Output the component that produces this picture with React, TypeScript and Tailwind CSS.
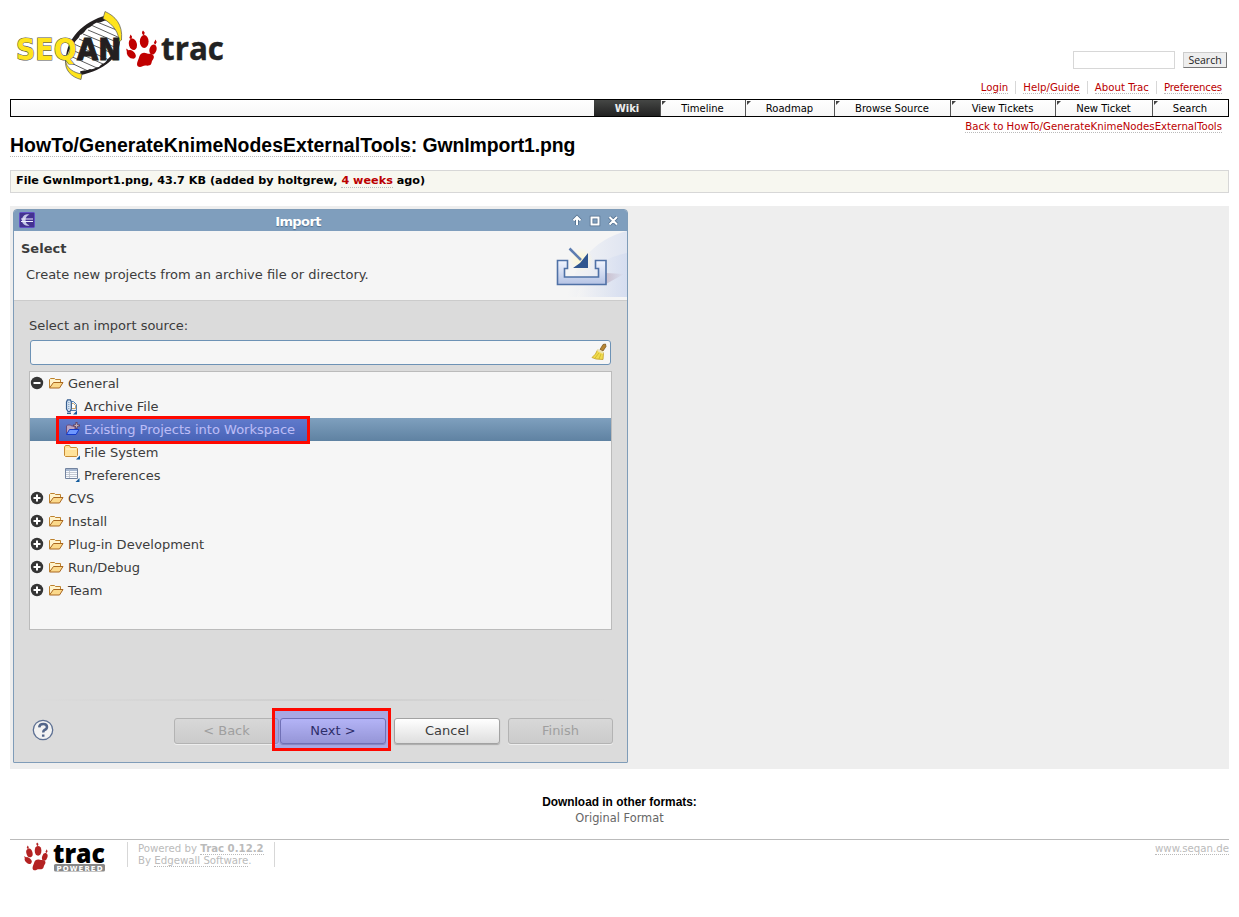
import type { ReactNode } from "react";

const Paw = ({ className, color }: { className: string; color: string }) => (
  <svg className={className} viewBox="0 0 31 38" fill={color}>
    <path d="M13.500 26C15 22.700 18 22.300 20.500 23.300C22.500 24.300 24.500 23 26.700 24.700C29 26.500 27.500 29 26.300 30.500C25.300 32 26 34.500 23.500 35.300C21 36.300 19 34.800 16.500 36.300C14 37.800 10.800 37 11 34C11.200 31.500 12.500 29.500 13.500 26Z" />
    <ellipse cx="5.300" cy="24.300" rx="3.500" ry="5.200" transform="rotate(-48 5.300 24.300)" />
    <ellipse cx="6.900" cy="14.300" rx="4" ry="5.800" transform="rotate(-16 6.900 14.300)" />
    <ellipse cx="18.200" cy="11.500" rx="4.400" ry="6.400" />
    <ellipse cx="27" cy="19.500" rx="3.500" ry="5.200" transform="rotate(16 27 19.500)" />
    <path d="M4.500 4.500L6 6.500L5.500 9.500L3.300 8ZM17 .5L18.700 2.500L18 5.500L16.200 4L16 2ZM29.500 9.500L30.700 12L29.500 14.500L27.800 13ZM.2 18.500L2.300 20L2.700 22L.8 21.800Z" />
  </svg>
);

const SeqanLogo = () => (
  <svg className="h-[72px] w-[113px] shrink-0 overflow-visible" viewBox="14 10 113 72">
    <path d="M67 60C68 44 80 27 104 20L118 32C122 45 110 63 84 73Q70 72 67 60Z" fill="#fff" />
    <path d="M97 22L119 31M91 25L120 38M88 30L119 43M83 34L117 48M79 39L114 54M74 44L109 60M70 49L103 64M68 55L97 68M67 61L88 71" stroke="#333" strokeWidth=".8" />
    <path d="M66 58C67 39 82 22 107 15L107 20.500C104 20 101 23 98 22.500C93 23 92 27 88 28C85 30 84 34 80 35C79 39 75 40 74 44C70 46 69 52 66 58Z" fill="#231f20" />
    <path d="M120 41C119 58 104 70 81 75L80 71.500C84 70 87 71 90 69C94 70 96 67 99 67C102 63 105 64 107 60C112 55 117 50 119 41Z" fill="#231f20" />
    <path d="M105 11.500C115 16 123 24 121.500 40L119 42C119 33 114 25 103 18.500Z" fill="#ffe41c" stroke="#555" strokeWidth=".7" />
    <path d="M65.500 60C66 68 74 73 82 74L81 79.500C71 77 64.500 70 65.500 60Z" fill="#ffe41c" stroke="#555" strokeWidth=".7" />
    <text x="16" y="60" textLength="60.500" lengthAdjust="spacingAndGlyphs" fontFamily="DejaVu Sans" fontWeight="bold" fontSize="30" fill="#ffe41c" stroke="#555" strokeWidth="1.200" paintOrder="stroke">SEQ</text>
    <text x="77" y="60" textLength="44" lengthAdjust="spacingAndGlyphs" fontFamily="DejaVu Sans" fontWeight="bold" fontSize="30" fill="#231f20" stroke="#231f20" strokeWidth="1.200">AN</text>
  </svg>
);

const Folder = () => (
  <svg className="mb-px -ml-px h-4 w-4 shrink-0" viewBox="0 0 16 16">
    <path d="M1.500 12.500V4.500L2.500 3.500H6.500L7.500 4.500H12.500V7.500" fill="#fff3cc" stroke="#bd812d" />
    <path d="M1.500 13L5.500 7.500H15L11.500 13Z" fill="#fbd98b" stroke="#a9661f" />
  </svg>
);

const Archive = () => (
  <svg className="h-4 w-4 shrink-0" viewBox="0 0 16 16">
    <path d="M5.500 2.500H9.500L12.500 5.500V11.500H5.500Z" fill="#e5effa" stroke="#517fb0" />
    <path d="M7.500 4.500H9.500L11.500 6.500V9.500H7.500Z" fill="#fff" stroke="#be914c" strokeWidth=".8" />
    <path d="M3.500 .9H6.500L7.300 3V10L6 12.500H4L2.500 10V3Z" fill="#d6e4f3" stroke="#375f91" strokeWidth="1.200" />
    <path d="M4.800 3V11" stroke="#7794b5" strokeDasharray="1 1" />
    <path d="M3 14.300H7" stroke="#375f91" strokeWidth="1.500" />
    <path d="M9 15.500H13V11.500Z" fill="#125a9c" />
  </svg>
);

const Project = () => (
  <svg className="mb-px h-4 w-4 shrink-0" viewBox="0 0 16 16">
    <path d="M2.500 13V5L3.500 4H6.500L7.500 5H11V8" fill="#f2d6b2" stroke="#8a6250" />
    <path d="M2.500 13.500L5.500 8.500H15L12 13.500Z" fill="#8fc5ff" stroke="#1c4dba" />
    <path d="M12.500 1V8M9 4.500H16" stroke="#8a5b30" strokeWidth="2" />
    <path d="M12.500 2.500V6.500M10.500 4.500H14.500" stroke="#ffe8a0" />
  </svg>
);

const FileSystem = () => (
  <svg className="mb-px h-4 w-4 shrink-0" viewBox="0 0 16 16">
    <path d="M.5 11.500V3L1.500 1.500H5.500L6.500 3.500H12.500L13.500 4.500V11.500L12.500 12.500H1.500Z" fill="#ffe39b" stroke="#c78a34" />
    <path d="M2 5H12" stroke="#fff8db" />
    <path d="M12 15.500H16V11.500Z" fill="#125a9c" />
  </svg>
);

const Preferences = () => (
  <svg className="mb-px h-4 w-4 shrink-0" viewBox="0 0 16 16">
    <path d="M1.500 1.500H13.500V11.500H1.500Z" fill="#f8fbff" stroke="#72839f" />
    <path d="M2 3H13" stroke="#a6b7d0" strokeWidth="2" />
    <path d="M2 5.500H13M2 7.500H13M2 9.500H13M5.500 3V11" stroke="#b6bdc8" strokeWidth=".8" />
    <path d="M11.500 15H15.500V11Z" fill="#125a9c" />
  </svg>
);

const Toggle = ({ open }: { open?: boolean }) => (
  <svg className="mr-[5px] mb-px h-[14px] w-[14px] shrink-0" viewBox="0 0 14 14">
    <circle cx="7" cy="7" r="6.200" fill="#353535" />
    <path d={open ? "M3.500 7H10.500" : "M3.500 7H10.500M7 3.500V10.500"} stroke="#fff" strokeWidth="2" />
  </svg>
);

const Branch = ({ label, open }: { label: string; open?: boolean }) => (
  <div className="flex h-[23px] items-center">
    <Toggle open={open} />
    <Folder />
    <span className="ml-1">{label}</span>
  </div>
);

const Leaf = ({ label, icon, selected }: { label: string; icon: ReactNode; selected?: boolean }) => (
  <div className={selected ? "flex h-[23px] items-center bg-linear-to-b from-[#7fa0be] to-[#5f82a2] pl-[34px] text-[#f5f5f5]" : "flex h-[23px] items-center pl-[34px]"}>
    {icon}
    <span className="ml-1">{label}</span>
  </div>
);

const Link = ({ children, className = "" }: { children: ReactNode; className?: string }) => (
  <a className={`border-b border-dotted border-[#bbb] ${className}`}>{children}</a>
);

const Tab = ({ label, className }: { label: string; className: string }) => (
  <div className={`relative flex h-full items-center justify-center border-l border-[#555] pr-px ${className}`}>
    <svg className="absolute top-[1px] left-[1px] h-1 w-1" viewBox="0 0 4 4"><path d="M0 0H4L0 4Z" fill="#444" /></svg>
    {label}
  </div>
);

const disabledButton = "flex h-[26px] w-[105px] items-center justify-center rounded-[3px] border border-[#b3b3b3] bg-linear-to-b from-[#d8d8d8] to-[#cbcbcb] text-[#9f9f9f] shadow-[0_1px_0_#eee]";
const enabledButton = "flex h-[26px] w-[106px] items-center justify-center rounded-[3px] border border-[#a2a2a2] bg-linear-to-b from-white to-[#dedede] shadow-[0_1px_1px_#aaa]";
const nextButton = "flex h-[26px] w-[106px] items-center justify-center rounded-[3px] border border-[#9292a0] bg-linear-to-b from-[#eaeaf4] to-[#c3c3cc] shadow-[0_1px_1px_#aaa]";

const Dialog = () => (
  <div className="relative flex h-[554px] w-[615px] flex-col overflow-hidden rounded-t-[4px] rounded-b-[1px] border border-[#7f9cb8] bg-[#dbdbdb] text-[13px] leading-[16px] text-[#3c3c3c]">
    <div className="flex h-[21px] shrink-0 items-center bg-[#7f9ebd] pr-[7px] pl-[5px] text-white">
      <svg className="mb-[2px] h-4 w-4 shrink-0" viewBox="0 0 16 16">
        <rect x=".5" y=".5" width="15" height="15" rx="1" fill="#443391" stroke="#6150c7" />
        <path d="M10.500 2.500A5.800 5.800 0 1 0 10.500 13.500Q6.500 12 6.500 8Q6.500 4 10.500 2.500" fill="#c5c8e8" />
        <path d="M2 7H14M2 9.500H14" stroke="#eef" />
      </svg>
      <span className="flex-1 pt-[3px] pr-[9px] text-center font-bold [text-shadow:0_1px_1px_#526f8d]"><span className="tracking-[-0.6px]">Import</span></span>
      <svg className="mb-px h-4 w-[50px] shrink-0" viewBox="0 0 50 16" fill="none">
        <path d="M7 13V5M3.500 8.500L7 5L10.500 8.500M21.500 5.500H28.500V12.500H21.500ZM39.500 5L47 12.500M47 5L39.500 12.500" stroke="#506d8b" strokeWidth="3.500" />
        <path d="M7 13V5M3.500 8.500L7 5L10.500 8.500M21.500 5.500H28.500V12.500H21.500ZM39.500 5L47 12.500M47 5L39.500 12.500" stroke="#fff" strokeWidth="2" />
      </svg>
    </div>
    <div className="flex h-[70px] shrink-0 justify-between border-b border-[#cbcbcb] bg-[#f5f5f5] pl-[7px]">
      <div className="pt-[10px]">
        <div className="font-bold">Select</div>
        <div className="mt-[10px] pl-[5px]">Create new projects from an archive file or directory.</div>
      </div>
      <svg className="h-[66px] w-[75px]" viewBox="0 0 75 66">
        <defs>
          <linearGradient id="wave"><stop stopColor="#f5f5f5" /><stop offset="1" stopColor="#d1daef" /></linearGradient>
          <linearGradient id="tray" x1="0" y1="0" x2="0" y2="1"><stop stopColor="#f1f5ff" /><stop offset="1" stopColor="#b5c3e4" /></linearGradient>
          <radialGradient id="glow"><stop stopColor="#fff8cf" /><stop offset="1" stopColor="#fff8cf" stopOpacity="0" /></radialGradient>
          <linearGradient id="shade"><stop stopColor="#b9a6b8" /><stop offset="1" stopColor="#b9a6b8" stopOpacity="0" /></linearGradient>
        </defs>
        <path d="M15 65Q28 12 75 0V66H15Z" fill="url(#wave)" opacity=".6" />
        <path d="M25 65Q35 30 75 22V66H25Z" fill="url(#wave)" opacity=".7" />
        <path d="M54 53L72 43L54 42Z" fill="url(#shade)" opacity=".6" />
        <circle cx="29" cy="29" r="12" fill="url(#glow)" />
        <path d="M5.500 29.500H15.500V37.500H12.500V46H46.500V37.500H43.500V29.500H54V53.500H5.500Z" fill="url(#tray)" stroke="#4f71a6" strokeWidth="1.600" />
        <path d="M17.500 17.500L29 29" stroke="#5e7db0" strokeWidth="2.500" />
        <path d="M36 22V37H21L28 32Z" fill="#30568f" />
      </svg>
    </div>
    <div className="flex flex-1 flex-col pr-[13px] pl-[15px]">
      <div className="pt-[17px]">Select an import source:</div>
      <div className="mt-[6px] ml-px flex h-[25px] w-[581px] shrink-0 items-center justify-end rounded-[3px] border border-[#6d92b5] bg-[#f6f6f6] pr-[3px]">
        <svg className="mb-px h-[18px] w-[16px]" viewBox="0 0 16 18">
          <path d="M12 1.500L14.500 1L15 3.500L12 8L9 6.500Z" fill="#b78632" stroke="#744e14" strokeWidth=".7" />
          <path d="M6.500 7L12.500 9.500L12 16.500L5 16L1 14.500Q5 11.500 6.500 7Z" fill="#f1dc4d" stroke="#c19e23" strokeWidth=".8" />
          <path d="M6.500 7L12.500 10" stroke="#eee3b0" strokeWidth="2" />
          <path d="M4 15L8 10M8 16L10 11" stroke="#c6aa27" strokeWidth=".7" />
        </svg>
      </div>
      <div className="mt-[6px] h-[259px] w-[583px] shrink-0 border border-[#bbb] bg-[#f6f6f6]">
        <Branch label="General" open />
        <Leaf label="Archive File" icon={<Archive />} />
        <Leaf label="Existing Projects into Workspace" icon={<Project />} selected />
        <Leaf label="File System" icon={<FileSystem />} />
        <Leaf label="Preferences" icon={<Preferences />} />
        <Branch label="CVS" />
        <Branch label="Install" />
        <Branch label="Plug-in Development" />
        <Branch label="Run/Debug" />
        <Branch label="Team" />
      </div>
      <div className="mt-[69px] h-[2px] w-[583px] shrink-0 bg-linear-to-r from-transparent via-[#cecece] to-transparent" />
      <div className="mt-[16px] flex items-center">
        <svg className="mr-[120px] mb-[2px] ml-[3px] h-[22px] w-[22px] shrink-0" viewBox="0 0 22 22">
          <circle cx="11" cy="11" r="9.700" fill="#f2f2f2" stroke="#5d7093" strokeWidth="1.300" />
          <path d="M7.200 8.300Q7.500 5 11.300 5Q15 5 15 8Q15 10 12.500 11Q11.200 11.600 11.200 13.500M11.200 15.500V17.700" fill="none" stroke="#526589" strokeWidth="2.500" />
        </svg>
        <div className="flex pt-px">
          <div className={disabledButton}>&lt; Back</div>
          <div className={`ml-px ${nextButton}`}>Next &gt;</div>
          <div className={`ml-2 ${enabledButton}`}>Cancel</div>
          <div className={`ml-2 ${disabledButton}`}>Finish</div>
        </div>
      </div>
    </div>
    <div className="absolute top-[206px] left-[42px] h-[28px] w-[254px] border-[3px] border-[#ff0800] bg-[#0000ff]/23" />
    <div className="absolute top-[498px] left-[258px] h-[43px] w-[119px] border-[3px] border-[#ff0800] bg-[#0000ff]/23" />
  </div>
);

export default function App() {
  return (
    <div className="min-h-[917px] bg-white px-[10px] font-['DejaVu_Sans',sans-serif] text-[10.200px] leading-[13px] text-black">
      <header className="flex h-[99px] justify-between pt-[10px]">
        <div className="flex items-start pl-[4px]">
          <SeqanLogo />
          <Paw className="mt-[20px] -ml-px h-[38px] w-[31px]" color="#c00000" />
          <svg className="mt-[14px] ml-[3px] h-[50px] w-[70px] overflow-visible" viewBox="0 0 70 50">
            <text x="1" y="36" textLength="63" lengthAdjust="spacingAndGlyphs" fontFamily="Open Sans" fontWeight="bold" fontSize="33" fill="#222" stroke="#222" strokeWidth=".4">trac</text>
          </svg>
        </div>
        <div className="flex flex-col items-end">
          <div className="mt-[41px] mr-[2px] flex items-center gap-[8px]">
            <div className="h-[18px] w-[102px] border border-[#d7d7d7]" />
            <div className="flex h-[16px] w-[44px] items-center justify-center border border-[#ccc] border-r-[#777] border-b-[#777] bg-[#eee] font-['Open_Sans',sans-serif] text-[10.500px] text-[#222]">Search</div>
          </div>
          <div className="mt-[12px] mr-[7px] flex text-[#b00]">
            <span><Link>Login</Link></span>
            <span className="ml-[7px] border-l border-[#d7d7d7] pl-[7px]"><Link>Help/Guide</Link></span>
            <span className="ml-[7px] border-l border-[#d7d7d7] pl-[7px]"><Link>About Trac</Link></span>
            <span className="ml-[7px] border-l border-[#d7d7d7] pl-[7px]"><Link className="tracking-[-0.170px]">Preferences</Link></span>
          </div>
        </div>
      </header>
      <nav className="flex h-[18px] justify-end border border-black bg-linear-to-b from-white to-[#f7f7f7] text-[10px]">
        <div className="flex w-[66px] items-center justify-center bg-linear-to-b from-[#454745] to-[#222] font-bold text-[#eee]">Wiki</div>
        <Tab label="Timeline" className="w-[85px]" />
        <Tab label="Roadmap" className="w-[89px]" />
        <Tab label="Browse Source" className="w-[116px]" />
        <Tab label="View Tickets" className="w-[105px]" />
        <Tab label="New Ticket" className="w-[97px]" />
        <Tab label="Search" className="w-[76px]" />
      </nav>
      <div className="flex h-[17px] justify-end pt-[3px] pr-[7px] text-[#b00]"><span><Link>Back to HowTo/GenerateKnimeNodesExternalTools</Link></span></div>
      <h1 className="h-[36px] font-['Liberation_Sans',sans-serif] text-[19.430px] leading-[22px] font-bold"><Link className="tracking-[0.060px]">HowTo/GenerateKnimeNodesExternalTools</Link><span className="tracking-[-0.1px]">: GwnImport1.png</span></h1>
      <div className="h-[23px] border border-[#d7d7d7] bg-[#f7f7f0] px-[5px] pt-[3px] text-[11.220px] font-bold">
        File GwnImport1.png, 43.7 KB (added by holtgrew, <Link className="text-[#b00]">4 weeks</Link> ago)
      </div>
      <main className="mt-[13px] h-[563px] bg-[#eee] pt-[3px] pl-[3px]"><Dialog /></main>
      <div className="h-[70px] pt-[26px] text-center">
        <h3 className="font-['Liberation_Sans',sans-serif] text-[11.900px] leading-[14px] font-bold">Download in other formats:</h3>
        <div className="mt-[3px] text-[11.400px] text-[#666]">Original Format</div>
      </div>
      <footer className="flex h-[40px] justify-between border-t border-[#bbb] leading-[12px] text-[#bbb]">
        <div className="flex">
          <Paw className="mt-[2px] ml-[14px] h-[29px] w-[24px]" color="#b42222" />
          <svg className="mt-[1px] ml-[4px] h-[32px] w-[55px] overflow-visible" viewBox="0 0 55 32">
            <text x="1" y="22" textLength="52" lengthAdjust="spacingAndGlyphs" fontFamily="Open Sans" fontWeight="800" fontSize="27" fill="#000">trac</text>
            <rect x="2" y="23" width="51" height="7.500" rx="1.500" fill="#888" />
            <text x="4.500" y="29.500" textLength="46" fontFamily="DejaVu Sans" fontWeight="bold" fontSize="7" fill="#fff">POWERED</text>
          </svg>
          <div className="mt-[2px] ml-[20px] h-[25px] w-[148px] border-x border-[#d7d7d7] pt-px pl-[10px] whitespace-nowrap">
            <div>Powered by <Link className="font-bold">Trac 0.12.2</Link></div>
            <div>By <Link>Edgewall Software</Link>.</div>
          </div>
        </div>
        <div className="pt-[3px]"><Link>www.seqan.de</Link></div>
      </footer>
    </div>
  );
}
